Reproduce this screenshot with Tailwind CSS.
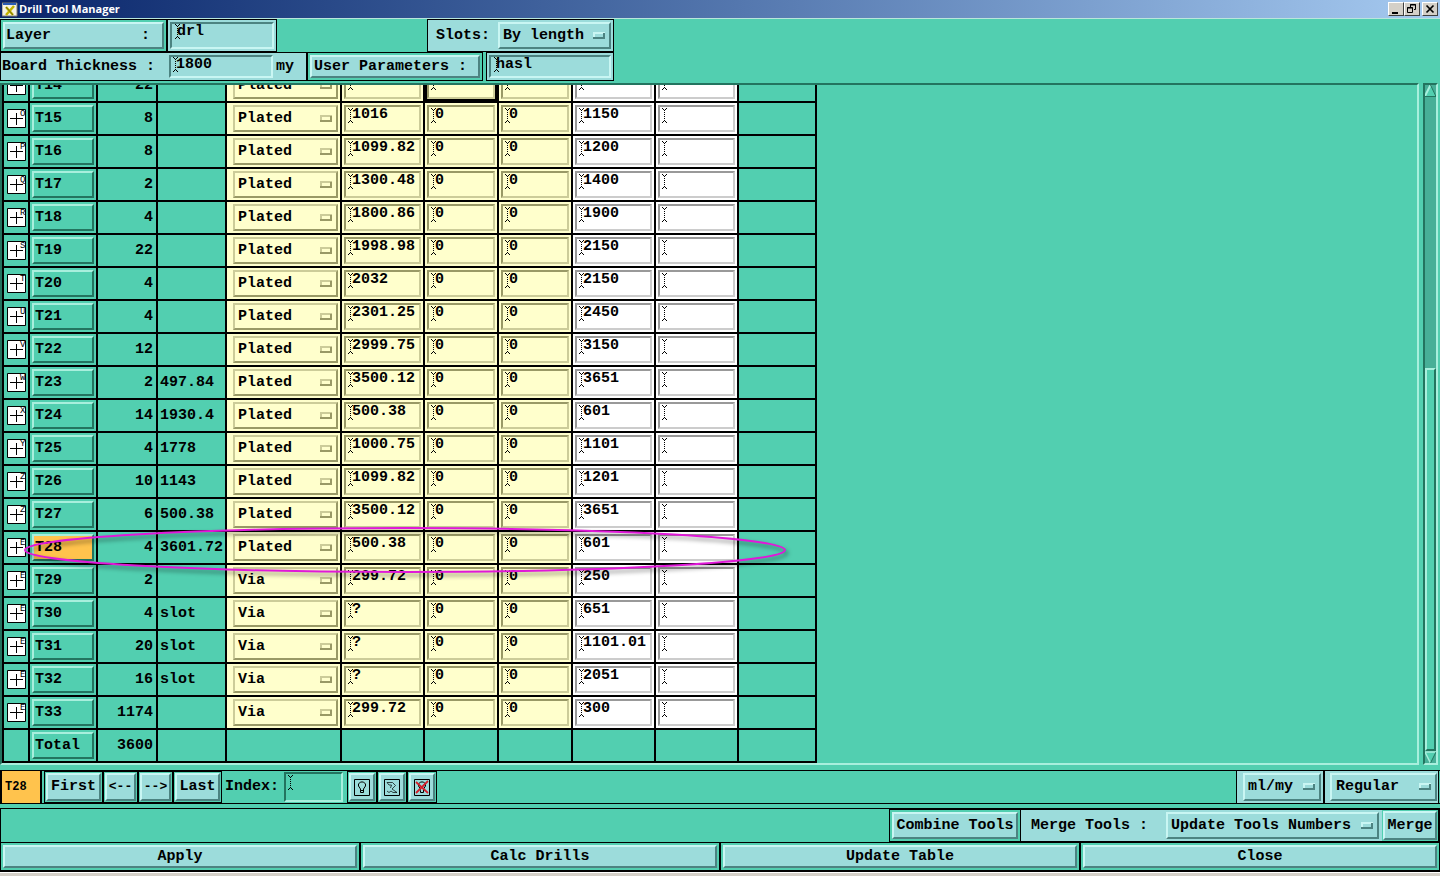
<!DOCTYPE html>
<html lang="en">

<head>
    <meta charset="UTF-8">
    <meta name="viewport" content="width=device-width, initial-scale=1.0">
    <title>Drill Tool Manager</title>
    <script src="https://cdn.jsdelivr.net/npm/@tailwindcss/browser@4"></script>
    <style>
        .mono {
            font-family: "Liberation Mono", monospace;
        }

        .raised {
            background: #9cdcdb;
            border: 2px solid;
            border-color: #c9f6f3 #4c8381 #4c8381 #c9f6f3;
        }

        .sunken {
            background: #9cdcdb;
            border: 2px solid;
            border-color: #4c8381 #c9f6f3 #c9f6f3 #4c8381;
        }

        .raised-green {
            border: 2px solid;
            border-color: #a8efdd #23745f #23745f #a8efdd;
        }

        .sunken-green {
            border: 2px solid;
            border-color: #23745f #a8efdd #a8efdd #23745f;
        }

        .raised-cream {
            border: 2px solid;
            border-color: #cccc99 #999966 #999966 #cccc99;
        }

        .sunken-cream {
            background: #ffffcc;
            border: 2px solid;
            border-color: #999966 #cccc99 #cccc99 #999966;
        }

        .sunken-white {
            border: 2px solid;
            border-color: #999 #ccc #ccc #999;
        }
    </style>
</head>

<body class="mono flex h-screen flex-col overflow-hidden bg-[#52cfb0] text-[15px] leading-4 font-bold text-black">
    <svg class="hidden">
        <symbol id="caret" viewBox="0 0 5 15">
            <path d="M0 .5h1M4 .5h1M1 1.5h1M3 1.5h1M1 13.5h1M3 13.5h1M0 14.5h1M4 14.5h1" stroke="#000" />
            <path d="M2.500 2v11" stroke="#000" stroke-dasharray="1 1" />
        </symbol>
        <symbol id="nub" viewBox="0 0 12 7">
            <path d="M1 7V1h11" fill="none" stroke="#c9f6f3" stroke-width="2" />
            <path d="M11 1v5H0" fill="none" stroke="#4c8381" stroke-width="2" />
        </symbol>
        <symbol id="nub-cream" viewBox="0 0 12 7">
            <path d="M1 7V1h11" fill="none" stroke="#cccc99" stroke-width="2" />
            <path d="M11 1v5H0" fill="none" stroke="#999966" stroke-width="2" />
        </symbol>
    </svg>

    <!-- Title bar -->
    <header class="flex h-[19px] shrink-0 items-center border-b border-[#b9e6dc] bg-linear-to-r from-[#0a246a] to-[#a6caf0] px-0.5">
        <svg class="h-4 w-4" viewBox="0 0 16 16">
            <path d="M0 2h15v13H0z" fill="#f4f1e4" stroke="#7f7c70" />
            <path d="M1 2h13v2H1z" fill="#2a5bb5" />
            <path d="M4 6l7 8M12 5l-8 9" stroke="#c3b400" stroke-width="2.500" />
            <path d="M4 6l7 8" stroke="#5d5a10" stroke-width=".8" />
        </svg>
        <h1 class="ml-px grow font-['Open_Sans',sans-serif] text-[11px] text-white">Drill Tool Manager</h1>
        <button aria-label="Minimize" class="h-3.5 w-4 border border-t-white border-r-[#404040] border-b-[#404040] border-l-white bg-[#d4d0c8]">
            <svg class="h-3 w-3.5" viewBox="0 0 14 12"><path d="M3 9h6v2H3z" /></svg>
        </button>
        <button aria-label="Restore" class="mr-0.5 h-3.5 w-4 border border-t-white border-r-[#404040] border-b-[#404040] border-l-white bg-[#d4d0c8]">
            <svg class="h-3 w-3.5" viewBox="0 0 14 12" fill="none" stroke="#000"><path d="M5.500 4V1.500h5v5H9M5 2h6M2.500 4.500h5v5h-5zM2 5h6" /></svg>
        </button>
        <button aria-label="Close window" class="h-3.5 w-4 border border-t-white border-r-[#404040] border-b-[#404040] border-l-white bg-[#d4d0c8]">
            <svg class="h-3 w-3.5" viewBox="0 0 14 12"><path d="M3.500 2.500l7 7M10.500 2.500l-7 7" stroke="#000" stroke-width="1.700" /></svg>
        </button>
    </header>

    <!-- Layer and board settings -->
    <section class="flex h-[33px] shrink-0">
        <div class="flex w-[167px] border border-black p-0.5">
            <button class="raised grow pl-px text-left whitespace-pre">Layer          :</button>
        </div>
        <div class="relative flex w-[110px] border border-black bg-[#9cdcdb] p-0.5">
            <input aria-label="Layer" value="drl" class="sunken w-full pb-2 pl-[5px] outline-none">
            <svg class="absolute top-1 left-[7px] h-[15px] w-[5px]"><use href="#caret" /></svg>
        </div>
        <div class="ml-[150px] flex w-[187px] items-center border border-black bg-[#9cdcdb] p-0.5">
            <label for="slots" class="grow pl-1.5">Slots:</label>
            <div class="relative flex h-full w-[113px]">
                <select id="slots" class="raised w-full appearance-none pl-[3px] outline-none">
                    <option>By length</option>
                </select>
                <svg class="absolute top-2.5 right-1.5 h-[7px] w-3"><use href="#nub" /></svg>
            </div>
        </div>
    </section>
    <section class="flex h-[29px] shrink-0">
        <div class="flex w-[307px] items-center border border-black bg-[#9cdcdb] p-0.5 pl-px">
            <label for="thickness" class="w-[167px]">Board Thickness :</label>
            <div class="relative h-full w-[104px]">
                <input id="thickness" value="1800" class="sunken h-full w-full pb-1 pl-[5px] outline-none">
                <svg class="absolute top-0.5 left-1 h-[15px] w-[5px]"><use href="#caret" /></svg>
            </div>
            <span class="pl-[3px]">my</span>
        </div>
        <div class="flex w-[176px] border border-black p-0.5">
            <button class="raised grow pl-0.5 text-left">User Parameters :</button>
        </div>
        <div class="relative ml-[3px] flex w-[128px] border border-black bg-[#9cdcdb] p-0.5">
            <input aria-label="User parameters" value="hasl" class="sunken w-full pb-1 pl-[5px] outline-none">
            <svg class="absolute top-1 left-[7px] h-[15px] w-[5px]"><use href="#caret" /></svg>
        </div>
    </section>

    <!-- Tool table, scrolled to its end -->
    <main class="mt-0.5 mb-[5px] flex min-h-0 grow pr-0.5">
        <div class="sunken-green flex min-w-0 grow flex-col justify-end overflow-hidden">
            <div class="relative">
                <table class="w-[815px] table-fixed border-separate border-spacing-0 border-l-2 border-black">
                    <colgroup>
                        <col class="w-[26px]">
                        <col class="w-[68px]">
                        <col class="w-[60px]">
                        <col class="w-[69px]">
                        <col class="w-[115px]">
                        <col class="w-[83px]">
                        <col class="w-[74px]">
                        <col class="w-[74px]">
                        <col class="w-[83px]">
                        <col class="w-[83px]">
                        <col class="w-[78px]">
                    </colgroup>
                    <tbody id="tools"></tbody>
                </table>
                <!-- Marker round the selected tool -->
                <svg class="pointer-events-none absolute bottom-[182px] left-5 h-[60px] w-[772px] drop-shadow-[2px_3px_2px_rgb(0_0_0_/_0.5)]" viewBox="0 0 772 60">
                    <ellipse cx="383" cy="29" rx="380" ry="22" fill="none" stroke="#e018d8" stroke-width="2" />
                </svg>
            </div>
        </div>
        <div class="sunken-green ml-1 flex w-[15px] shrink-0 flex-col bg-[#47af97]">
            <svg class="h-3 w-full shrink-0" viewBox="0 0 11 12">
                <path d="M5.500 0L0 11h11z" fill="#52cfb0" />
                <path d="M0 11L5.500 0" stroke="#a8efdd" stroke-width="2" />
                <path d="M5.500 0L11 11.500H0" fill="none" stroke="#23745f" />
            </svg>
            <div class="grow-[273]"></div>
            <div class="raised-green grow-[382] bg-[#52cfb0]"></div>
            <svg class="h-3 w-full shrink-0" viewBox="0 0 11 12">
                <path d="M0 1h11L5.500 12z" fill="#52cfb0" />
                <path d="M5.500 12L0 1h11" fill="none" stroke="#a8efdd" stroke-width="1.500" />
                <path d="M11 1L5.500 12" stroke="#23745f" />
            </svg>
        </div>
    </main>

    <!-- Navigation -->
    <nav class="mb-1 flex h-[34px] shrink-0 border-y border-black pr-px">
        <div class="mr-0.5 flex w-[42px] items-center border-x-2 border-black bg-[#ffc34d] pl-[3px] text-[12px]">T28</div>
        <div class="flex w-[59px] border border-black p-px"><button class="raised grow">First</button></div>
        <div class="flex w-[35px] border border-black p-px"><button class="raised grow text-[13px]">&lt;--</button></div>
        <div class="flex w-[35px] border border-black p-px"><button class="raised grow text-[13px]">--&gt;</button></div>
        <div class="flex w-[49px] border border-black p-px"><button class="raised grow">Last</button></div>
        <label for="index" class="self-center px-[3px]">Index:</label>
        <div class="relative ml-0.5 mr-1 flex w-[59px] py-px">
            <input id="index" class="sunken-green w-full outline-none">
            <svg class="absolute top-1 left-1 h-[15px] w-[5px]"><use href="#caret" /></svg>
        </div>
        <div class="flex w-[30px] border border-black p-px">
            <button aria-label="Highlight" class="raised flex grow items-center justify-center">
                <svg class="h-[17px] w-4" viewBox="0 0 16 17" fill="none" stroke="#000">
                    <path d="M.5.500h15v16H.5zM6.500 11.500V10l-2-3V5l2-2h3l2 2v2l-2 3v3.500h-3zM6.500 11.500h3" />
                </svg>
            </button>
        </div>
        <div class="flex w-[30px] border border-black p-px">
            <button aria-label="Zoom to tool" class="raised flex grow items-center justify-center">
                <svg class="h-[17px] w-4" viewBox="0 0 16 17" fill="none" stroke="#000">
                    <path d="M.5.500h15v16H.5z" />
                    <path d="M3 3.500h5.500l3 3-3.500 3.500 5 3.500h-4l-2-1.500-2 1.500-2-1.500M3 3.500l2 2.500h2.500l-1 3" stroke-width=".7" />
                </svg>
            </button>
        </div>
        <div class="flex w-[30px] border border-black p-px">
            <button aria-label="Clear highlight" class="raised flex grow items-center justify-center">
                <svg class="h-[17px] w-4" viewBox="0 0 16 17" fill="none" stroke="#000">
                    <path d="M.5.500h15v16H.5zM6.500 11.500V10l-2-3V5l2-2h3l2 2v2l-2 3v3.500h-3z" />
                    <path d="M2 3l12 11M14 2L2 14" stroke="#d4202c" stroke-width="1.800" />
                </svg>
            </button>
        </div>
        <div class="ml-auto flex w-[88px] border-x border-black bg-[#9cdcdb] py-0.5 pr-0.5 pl-1.5">
            <div class="relative flex grow">
                <select aria-label="Units" class="raised w-full appearance-none pl-[3px] outline-none">
                    <option>ml/my</option>
                </select>
                <svg class="absolute top-2.5 right-1.5 h-[7px] w-3"><use href="#nub" /></svg>
            </div>
        </div>
        <div class="flex w-[115px] border-x border-black bg-[#9cdcdb] py-0.5 pr-px pl-[5px]">
            <div class="relative flex grow">
                <select aria-label="Mode" class="raised w-full appearance-none pl-1 outline-none">
                    <option>Regular</option>
                </select>
                <svg class="absolute top-2.5 right-1.5 h-[7px] w-3"><use href="#nub" /></svg>
            </div>
        </div>
    </nav>

    <!-- Merge tools -->
    <section class="flex h-[34px] shrink-0 justify-end border border-b-0 border-black">
        <div class="flex w-[132px] border border-black p-0.5"><button class="raised grow">Combine Tools</button></div>
        <div class="flex w-[361px] items-center border-y border-black bg-[#9cdcdb] py-0.5 pr-[3px] pl-2.5">
            <label for="merge" class="grow">Merge Tools :</label>
            <div class="relative flex h-full w-[213px]">
                <select id="merge" class="raised w-full appearance-none pl-[3px] outline-none">
                    <option>Update Tools Numbers</option>
                </select>
                <svg class="absolute top-2.5 right-1.5 h-[7px] w-3"><use href="#nub" /></svg>
            </div>
        </div>
        <div class="flex w-[57px] border-y border-r border-black p-px"><button class="raised grow">Merge</button></div>
    </section>

    <!-- Actions -->
    <footer class="grid h-[30px] shrink-0 grid-cols-4 border-b border-black">
        <div class="flex border border-black p-0.5"><button class="raised grow">Apply</button></div>
        <div class="flex border border-black p-0.5"><button class="raised grow">Calc Drills</button></div>
        <div class="flex border border-black p-0.5"><button class="raised grow">Update Table</button></div>
        <div class="flex border border-black p-0.5"><button class="raised grow">Close</button></div>
    </footer>
    <div class="h-1 shrink-0 border-t border-white bg-[#d4d0c8]"></div>

    <script>
        // symbol, tool, count, size, type, finish size, drill size
        const tools = [
            ["N", "T14", 22, "", "Plated", "1000.75", "1100"],
            ["O", "T15", 8, "", "Plated", "1016", "1150"],
            ["P", "T16", 8, "", "Plated", "1099.82", "1200"],
            ["Q", "T17", 2, "", "Plated", "1300.48", "1400"],
            ["R", "T18", 4, "", "Plated", "1800.86", "1900"],
            ["S", "T19", 22, "", "Plated", "1998.98", "2150"],
            ["T", "T20", 4, "", "Plated", "2032", "2150"],
            ["U", "T21", 4, "", "Plated", "2301.25", "2450"],
            ["V", "T22", 12, "", "Plated", "2999.75", "3150"],
            ["W", "T23", 2, "497.84", "Plated", "3500.12", "3651"],
            ["X", "T24", 14, "1930.4", "Plated", "500.38", "601"],
            ["Y", "T25", 4, "1778", "Plated", "1000.75", "1101"],
            ["Z", "T26", 10, "1143", "Plated", "1099.82", "1201"],
            ["Z", "T27", 6, "500.38", "Plated", "3500.12", "3651"],
            ["E", "T28", 4, "3601.72", "Plated", "500.38", "601"],
            ["E", "T29", 2, "", "Via", "299.72", "250"],
            ["E", "T30", 4, "slot", "Via", "?", "651"],
            ["E", "T31", 20, "slot", "Via", "?", "1101.01"],
            ["E", "T32", 16, "slot", "Via", "?", "2051"],
            ["E", "T33", 1174, "", "Via", "299.72", "300"],
        ];

        const cell = "h-[33px] border-r-2 border-b-2 border-black p-0";

        const field = (value, label, color, edge) => `
            <td class="${cell} ${color}">
                <div class="relative mr-0.5 ml-0.5 h-[27px]">
                    <input aria-label="${label}" value="${value}" class="${edge} block h-full w-full pb-2 pl-1.5 outline-none">
                    <svg class="absolute top-[3px] left-1 h-[15px] w-[5px]"><use href="#caret" /></svg>
                </div>
            </td>`;

        const row = ([symbol, tool, count, size, type, finish, drill]) => `
            <tr>
                <td class="${cell}">
                    <svg class="ml-[3px] h-5 w-5" viewBox="0 0 20 20">
                        <path d="M.5.500h18v18H.5z" fill="#fff" stroke="#000" />
                        <path d="M3 9.500h13M9.500 4v12" stroke="#000" />
                        <text x="13" y="7" font-size="9" font-weight="400">${symbol}</text>
                    </svg>
                </td>
                <td class="${cell}">
                    <button class="raised-green ml-0.5 block h-[27px] w-[62px] pl-px text-left ${tool === "T28" ? "bg-[#ffc34d]" : ""}">${tool}</button>
                </td>
                <td class="${cell} pr-[3px] text-right">${count}</td>
                <td class="${cell} pl-0.5">${size}</td>
                <td class="${cell} bg-[#ffffcc]">
                    <div class="relative mr-0.5 ml-1.5 h-[27px]">
                        <select aria-label="${tool} type" class="raised-cream block h-full w-full appearance-none pl-[3px] outline-none">
                            <option>${type}</option>
                        </select>
                        <svg class="absolute top-2.5 right-1.5 h-[7px] w-3"><use href="#nub-cream" /></svg>
                    </div>
                </td>
                ${field(finish, tool + " finish size", "bg-[#ffffcc]", "sunken-cream")}
                ${field("0", tool + " plus tolerance", tool === "T14" ? "bg-black" : "bg-[#ffffcc]", "sunken-cream")}
                ${field("0", tool + " minus tolerance", "bg-[#ffffcc]", "sunken-cream")}
                ${field(drill, tool + " drill size", "bg-white", "sunken-white")}
                ${field("", tool + " designator", "bg-white", "sunken-white")}
                <td class="${cell}"></td>
            </tr>`;

        const total = `
            <tr>
                <td class="${cell}"></td>
                <td class="${cell}">
                    <button class="raised-green ml-0.5 block h-[27px] w-[62px] pl-px text-left">Total</button>
                </td>
                <td class="${cell} pr-[3px] text-right">3600</td>
                ${`<td class="${cell}"></td>`.repeat(8)}
            </tr>`;

        document.querySelector("#tools").innerHTML = tools.map(row).join("") + total;
    </script>
</body>

</html>
